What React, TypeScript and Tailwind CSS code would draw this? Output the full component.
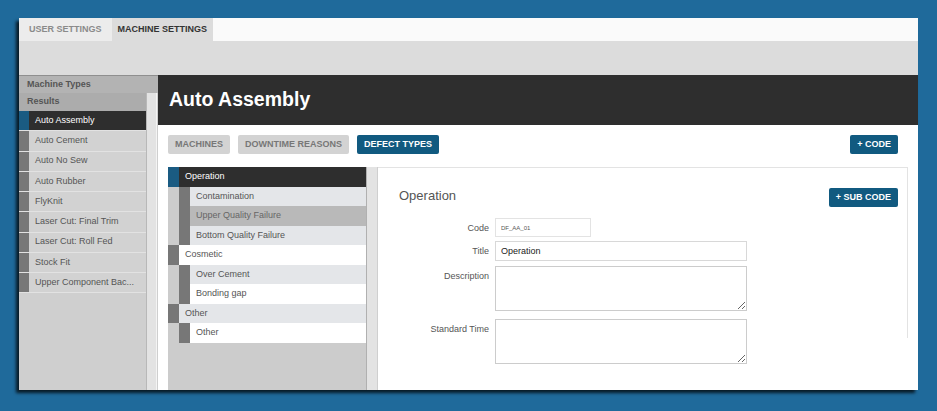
const machines = [
  "Auto Assembly",
  "Auto Cement",
  "Auto No Sew",
  "Auto Rubber",
  "FlyKnit",
  "Laser Cut: Final Trim",
  "Laser Cut: Roll Fed",
  "Stock Fit",
  "Upper Component Bac...",
]

const defects = [
  { label: "Operation", child: false, active: true },
  { label: "Contamination", child: true },
  { label: "Upper Quality Failure", child: true, selected: true },
  { label: "Bottom Quality Failure", child: true },
  { label: "Cosmetic", child: false },
  { label: "Over Cement", child: true },
  { label: "Bonding gap", child: true },
  { label: "Other", child: false },
  { label: "Other", child: true },
]

export default function App() {
  return (
    <div className="h-[411px] w-[937px] overflow-hidden bg-[#1f6a9b] pl-[19px] pt-[18px] font-['Liberation_Sans',Arial,sans-serif]">
      <div className="flex h-[372px] w-[899px] flex-col bg-white shadow-[-3px_3px_3px_rgba(0,0,0,0.75)]">
        {/* Top tabs */}
        <div className="flex h-[23px] bg-[#fafafa]">
          <div className="flex items-center bg-[#ececec] px-[10px] text-[9px] font-bold text-[#8a8a8a]">USER SETTINGS</div>
          <div className="flex items-center bg-[#dcdcdc] px-[6px] text-[9px] font-bold text-[#333]">MACHINE SETTINGS</div>
        </div>
        <div className="h-[34px] bg-[#dcdcdc]" />

        <div className="flex min-h-0 flex-1">
          {/* Sidebar */}
          <div className="flex w-[139px] flex-col border-t border-[#8f8f8f] bg-[#cfcfcf]">
            <div className="flex h-[17px] items-center bg-[#b3b3b3] pl-[8px] text-[9px] font-bold text-[#555]">Machine Types</div>
            <div className="flex flex-1">
              <div className="flex w-[128px] flex-col border-r border-[#b8b8b8]">
                <div className="flex h-[18px] items-center bg-[#acacac] pl-[8px] text-[9px] font-bold text-[#555]">Results</div>
                {machines.map((m, i) => (
                  <div key={i} className="flex h-[20.25px] border-b border-[#e2e2e2]">
                    <div className={`w-[10px] ${i === 0 ? "bg-[#1a5b82]" : "bg-[#777]"}`} />
                    <div
                      className={`flex flex-1 items-center truncate pl-[6px] text-[9px] ${
                        i === 0 ? "bg-[#2e2e2e] text-white" : "bg-[#d2d2d2] text-[#555]"
                      }`}
                    >
                      {m}
                    </div>
                  </div>
                ))}
              </div>
              <div className="w-[10px] border-r border-[#f4f4f4] bg-[#e3e3e3]" />
            </div>
          </div>

          {/* Main */}
          <div className="flex min-w-0 flex-1 flex-col">
            <div className="flex h-[50px] items-center bg-[#2e2e2e] pl-[11px] text-[19.5px] font-bold text-white">Auto Assembly</div>
            <div className="flex min-h-0 flex-1 flex-col pl-[10px] pr-[10px] pt-[10px]">
              <div className="flex h-[19px] items-center gap-[8px] pr-[10px]">
                <button className="h-full rounded-[2px] bg-[#d3d3d3] px-[7px] text-[9px] font-bold text-[#777]">MACHINES</button>
                <button className="h-full rounded-[2px] bg-[#d3d3d3] px-[7px] text-[9px] font-bold text-[#777]">DOWNTIME REASONS</button>
                <button className="h-full rounded-[2px] bg-[#115a80] px-[7px] text-[9px] font-bold text-white">DEFECT TYPES</button>
                <button className="ml-auto h-full rounded-[2px] bg-[#115a80] px-[7px] text-[9px] font-bold text-white">+ CODE</button>
              </div>

              <div className="mt-[13px] flex min-h-0 flex-1">
                {/* Defect tree */}
                <div className="flex w-[199px] flex-col border-r border-[#b0b0b0] bg-[#cccccc]">
                  {defects.map((d, i) => {
                    const bg = d.active ? "bg-[#2e2e2e] text-white" : d.selected ? "bg-[#b9b9b9] text-[#666]" : i % 2 === 1 ? "bg-[#e4e6e9] text-[#555]" : "bg-white text-[#555]"
                    return (
                      <div key={i} className="flex h-[19.5px]">
                        {d.child && <div className="w-[11px]" />}
                        <div className={`w-[11px] ${d.active ? "bg-[#1a5b82]" : "bg-[#777]"}`} />
                        <div className={`flex flex-1 items-center pl-[6px] text-[9px] ${bg}`}>{d.label}</div>
                      </div>
                    )
                  })}
                </div>
                <div className="w-[11px] border-r border-[#cfcfcf] bg-[#e3e3e3]" />

                {/* Detail pane */}
                <div className="h-[171px] flex-1 self-start border-r border-t border-[#e3e3e3] pl-[21px] pr-[9px] pt-[20px]">
                  <div className="flex h-[19px] items-start justify-between">
                    <h2 className="text-[13px] leading-[15px] text-[#555]">Operation</h2>
                    <button className="h-full rounded-[2px] bg-[#115a80] px-[7px] text-[9px] font-bold text-white">+ SUB CODE</button>
                  </div>

                  <div className="mt-[11px] flex flex-col">
                    <div className="flex">
                      <label className="w-[90px] pt-[4px] text-right text-[9px] leading-[12px] text-[#555]">Code</label>
                      <input
                        readOnly
                        value="DF_AA_01"
                        className="ml-[6px] h-[19px] w-[96px] border border-[#e3e3e3] pl-[5px] text-[6px] text-[#555] outline-none"
                      />
                    </div>
                    <div className="mt-[4px] flex">
                      <label className="w-[90px] pt-[4px] text-right text-[9px] leading-[12px] text-[#555]">Title</label>
                      <input
                        readOnly
                        value="Operation"
                        className="ml-[6px] h-[20px] w-[252px] border border-[#d8d8d8] pl-[5px] text-[9px] text-[#222] outline-none"
                      />
                    </div>
                    <div className="mt-[5px] flex">
                      <label className="w-[90px] pt-[4px] text-right text-[9px] leading-[12px] text-[#555]">Description</label>
                      <textarea className="ml-[6px] h-[45px] w-[252px] border border-[#cccccc] outline-none" />
                    </div>
                    <div className="mt-[8px] flex">
                      <label className="w-[90px] pt-[4px] text-right text-[9px] leading-[12px] text-[#555]">Standard Time</label>
                      <textarea className="ml-[6px] h-[45px] w-[252px] border border-[#cccccc] outline-none" />
                    </div>
                  </div>
                </div>
              </div>
            </div>
          </div>
        </div>
      </div>
    </div>
  )
}
